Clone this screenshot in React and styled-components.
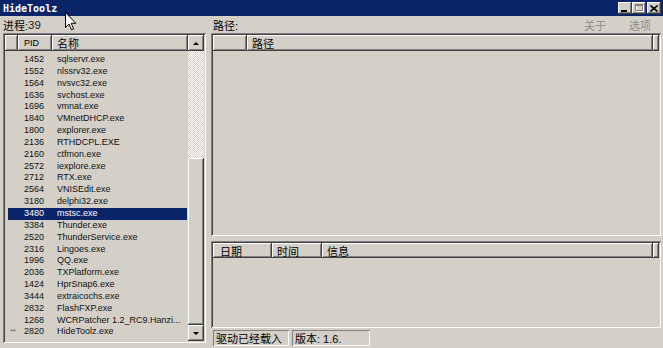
import React from 'react';
import styled, { createGlobalStyle } from 'styled-components';

const FACE = '#d4d0c8';

const Global = createGlobalStyle`
  html, body { margin: 0; padding: 0; background: ${FACE}; }
  body { font-family: "Liberation Sans", "Noto Sans CJK SC", sans-serif; }
`;

const Window = styled.div`
  position: relative;
  width: 663px;
  height: 348px;
  background: ${FACE};
  display: flex;
  flex-direction: column;
  overflow: hidden;
`;

const TitleBar = styled.div`
  height: 16px;
  flex: none;
  background: #0a246a;
  display: flex;
  align-items: center;
  padding: 0 2px 0 3px;
`;

const TitleText = styled.span`
  flex: 1;
  font-family: "DejaVu Sans Mono", monospace;
  font-weight: bold;
  font-size: 10px;
  color: #fff;
`;

const CaptionButtons = styled.div`
  display: flex;
  align-items: center;
`;

const CaptionButton = styled.div`
  width: 14px;
  height: 12px;
  margin-left: ${p => p.$gap || 0}px;
  background: ${FACE};
  box-shadow: inset -1px -1px #404040, inset 1px 1px #fff, inset -2px -2px #808080;
  display: flex;
  align-items: center;
  justify-content: center;
`;

const Body = styled.div`
  flex: 1;
  display: flex;
  gap: 5px;
  padding: 0 2px 0 3px;
  min-height: 0;
`;

const LeftPane = styled.div`
  width: 203px;
  flex: none;
  display: flex;
  flex-direction: column;
  padding-bottom: 5px;
`;

const RightPane = styled.div`
  flex: 1;
  display: flex;
  flex-direction: column;
  padding-bottom: 2px;
`;

const LabelRow = styled.div`
  height: 17px;
  flex: none;
  display: flex;
  align-items: center;
  padding-left: ${p => p.$indent || 0}px;
  padding-right: ${p => p.$right || 0}px;
  font-size: 11px;
  color: #000;
`;

const Count = styled.span`
  font-size: 11.5px;
  color: #222;
`;

const Spacer = styled.div`flex: 1;`;

const MenuLink = styled.span`
  color: #8c8c8c;
  font-size: 11px;
  margin-left: ${p => p.$gap || 0}px;
`;

const Sunken = styled.div`
  height: ${p => (p.$h ? `${p.$h}px` : 'auto')};
  flex: ${p => (p.$h ? 'none' : '1')};
  padding: 2px;
  box-sizing: border-box;
  box-shadow: inset 1px 1px #808080, inset -1px -1px #fff, inset 2px 2px #404040, inset -2px -2px ${FACE};
  display: flex;
  min-height: 0;
`;

const ListArea = styled.div`
  flex: 1;
  display: flex;
  flex-direction: column;
  overflow: hidden;
  min-width: 0;
`;

const HeaderRow = styled.div`
  height: ${p => p.$h || 16}px;
  flex: none;
  display: flex;
`;

const HeaderCell = styled.div`
  width: ${p => (p.$w ? `${p.$w}px` : 'auto')};
  flex: ${p => (p.$w ? 'none' : '1')};
  box-sizing: border-box;
  padding-left: ${p => p.$pad ?? 5}px;
  display: flex;
  align-items: center;
  font-size: ${p => (p.$latin ? 9 : 11)}px;
  color: #000;
  background: ${FACE};
  box-shadow: inset -1px -1px #404040, inset 1px 1px #fff, inset -2px -2px #808080;
  white-space: nowrap;
`;

const Rows = styled.div`
  padding-top: 3px;
`;

const Row = styled.div`
  height: 11.85px;
  line-height: 11.85px;
  margin: 0 1px 0 3px;
  display: flex;
  font-size: 9px;
  color: ${p => (p.$sel ? '#fff' : '#111')};
  background: ${p => (p.$sel ? '#0a246a' : 'transparent')};
  white-space: nowrap;
`;

const MarkCell = styled.span`
  width: 10px;
  flex: none;
  font-size: 7px;
  color: #555;
  text-align: center;
`;

const PidCell = styled.span`
  width: 34px;
  flex: none;
  box-sizing: border-box;
  text-align: right;
  padding-right: 8px;
`;

const NameCell = styled.span`
  flex: 1;
  padding-left: 5px;
  overflow: hidden;
`;

const ScrollBar = styled.div`
  width: 16px;
  flex: none;
  display: flex;
  flex-direction: column;
`;

const ScrollArrow = styled.div`
  height: 16px;
  flex: none;
  background: ${FACE};
  box-shadow: inset -1px -1px #404040, inset 1px 1px #fff, inset -2px -2px #808080;
  display: flex;
  align-items: center;
  justify-content: center;
  &::after {
    content: '';
    width: 0;
    height: 0;
    border-left: 3px solid transparent;
    border-right: 3px solid transparent;
    ${p => (p.$down ? 'border-top: 3px solid #000;' : 'border-bottom: 3px solid #000;')}
  }
`;

const Track = styled.div`
  height: ${p => p.$h}px;
  flex: none;
  background: repeating-conic-gradient(#fff 0 25%, ${FACE} 0 50%) 0 0 / 2px 2px;
`;

const Thumb = styled.div`
  flex: 1;
  background: ${FACE};
  box-shadow: inset -1px -1px #404040, inset 1px 1px #fff, inset -2px -2px #808080;
`;

const StatusBar = styled.div`
  height: 16px;
  flex: none;
  margin-top: 2px;
  display: flex;
  gap: 3px;
  padding-left: 2px;
`;

const StatusPanel = styled.div`
  width: ${p => p.$w}px;
  box-sizing: border-box;
  padding-left: 3px;
  display: flex;
  align-items: center;
  font-size: 11px;
  color: #000;
  box-shadow: inset 1px 1px #808080, inset -1px -1px #fff;
  white-space: nowrap;
`;

const Cursor = styled.svg`
  position: absolute;
  left: 65px;
  top: 12px;
`;

const processes = [
  ['1452', 'sqlservr.exe'],
  ['1552', 'nlssrv32.exe'],
  ['1564', 'nvsvc32.exe'],
  ['1636', 'svchost.exe'],
  ['1696', 'vmnat.exe'],
  ['1840', 'VMnetDHCP.exe'],
  ['1800', 'explorer.exe'],
  ['2136', 'RTHDCPL.EXE'],
  ['2160', 'ctfmon.exe'],
  ['2572', 'iexplore.exe'],
  ['2712', 'RTX.exe'],
  ['2564', 'VNISEdit.exe'],
  ['3180', 'delphi32.exe'],
  ['3480', 'mstsc.exe', 'sel'],
  ['3384', 'Thunder.exe'],
  ['2520', 'ThunderService.exe'],
  ['2316', 'Lingoes.exe'],
  ['1996', 'QQ.exe'],
  ['2036', 'TXPlatform.exe'],
  ['1424', 'HprSnap6.exe'],
  ['3444', 'extraicochs.exe'],
  ['2832', 'FlashFXP.exe'],
  ['1268', 'WCRPatcher 1.2_RC9.Hanzi...'],
  ['2820', 'HideToolz.exe', 'mark'],
];

export default function App() {
  return (
    <>
      <Global />
      <Window>
        <TitleBar>
          <TitleText>HideToolz</TitleText>
          <CaptionButtons>
            <CaptionButton>
              <svg width="8" height="7" viewBox="0 0 8 7">
                <rect x="0" y="5" width="6" height="2" fill="#000" />
              </svg>
            </CaptionButton>
            <CaptionButton>
              <svg width="9" height="8" viewBox="0 0 9 8">
                <rect x="1.5" y="1.5" width="7" height="6" fill="none" stroke="#fff" />
                <rect x="0.5" y="0.5" width="7" height="6" fill="none" stroke="#808080" />
                <rect x="0" y="0" width="8" height="2" fill="#808080" />
              </svg>
            </CaptionButton>
            <CaptionButton $gap={1}>
              <svg width="8" height="7" viewBox="0 0 8 7">
                <path d="M0.5 0.5 L7.5 6.5 M7.5 0.5 L0.5 6.5" stroke="#000" strokeWidth="1.6" />
              </svg>
            </CaptionButton>
          </CaptionButtons>
        </TitleBar>
        <Body>
          <LeftPane>
            <LabelRow>进程:<Count>39</Count></LabelRow>
            <Sunken>
              <ListArea>
                <HeaderRow>
                  <HeaderCell $w={13} />
                  <HeaderCell $w={34} $pad={6} $latin>PID</HeaderCell>
                  <HeaderCell>名称</HeaderCell>
                </HeaderRow>
                <Rows>
                  {processes.map(([pid, name, flag]) => (
                    <Row key={pid + name} $sel={flag === 'sel'}>
                      <MarkCell>{flag === 'mark' ? '**' : ''}</MarkCell>
                      <PidCell>{pid}</PidCell>
                      <NameCell>{name}</NameCell>
                    </Row>
                  ))}
                </Rows>
              </ListArea>
              <ScrollBar>
                <ScrollArrow />
                <Track $h={107} />
                <Thumb />
                <ScrollArrow $down />
              </ScrollBar>
            </Sunken>
          </LeftPane>
          <RightPane>
            <LabelRow $indent={2} $right={10}>
              路径:
              <Spacer />
              <MenuLink>关于</MenuLink>
              <MenuLink $gap={23}>选项</MenuLink>
            </LabelRow>
            <Sunken $h={203}>
              <ListArea>
                <HeaderRow>
                  <HeaderCell $w={34} />
                  <HeaderCell $w={406}>路径</HeaderCell>
                  <HeaderCell />
                </HeaderRow>
              </ListArea>
            </Sunken>
            <Spacer />
            <Sunken $h={87}>
              <ListArea>
                <HeaderRow $h={15}>
                  <HeaderCell $w={59} $pad={7}>日期</HeaderCell>
                  <HeaderCell $w={50}>时间</HeaderCell>
                  <HeaderCell $w={331}>信息</HeaderCell>
                  <HeaderCell />
                </HeaderRow>
              </ListArea>
            </Sunken>
            <StatusBar>
              <StatusPanel $w={76}>驱动已经载入</StatusPanel>
              <StatusPanel $w={78}>版本: 1.6.</StatusPanel>
            </StatusBar>
          </RightPane>
        </Body>
        <Cursor width="12" height="19" viewBox="0 0 12 19">
          <path d="M0.5 0.5 L0.5 15.5 L4 12 L6.5 17.8 L8.6 16.9 L6.2 11.3 L10.8 11.3 Z" fill="#fff" stroke="#000" strokeWidth="1" />
        </Cursor>
      </Window>
    </>
  );
}
